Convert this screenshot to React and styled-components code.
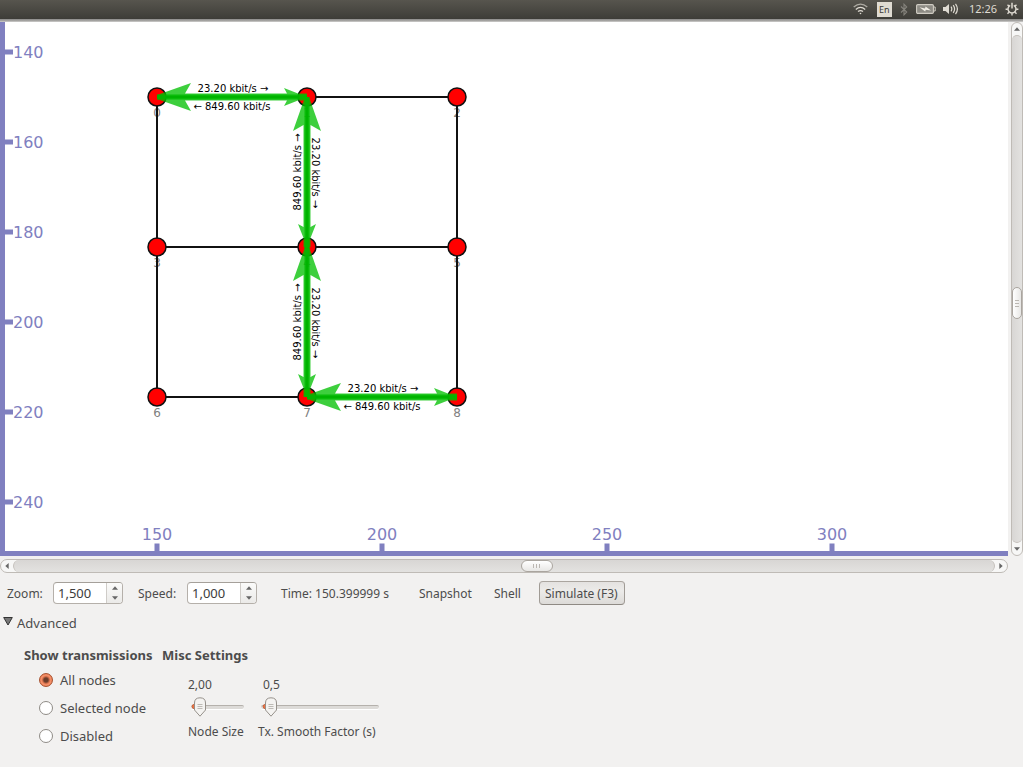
import React, { useState } from "react";
import styled, { createGlobalStyle, css } from "styled-components";

const GlobalStyle = createGlobalStyle`
  * { box-sizing: border-box; }
  body {
    margin: 0;
    background: #f2f1f0;
    color: #4c4c4c;
    font: 13px/20px "Noto Sans", "Open Sans", sans-serif;
  }
  button, input { font: inherit; color: inherit; margin: 0; }
`;

const Window = styled.div`
  display: flex;
  flex-direction: column;
  min-height: 100vh;
`;

/* ---------- desktop panel ---------- */

const Panel = styled.header`
  display: flex;
  justify-content: flex-end;
  align-items: center;
  height: 22px;
  padding: 0 4px 4px 0;
  color: #dfdbd2;
  font-size: 11px;
  line-height: 18px;
  background: linear-gradient(#57554e 0, #3f3e39 18px, #3c3b37 19px, #8c8b89 19px, #aaa9a7 21px, #d8d7d6 22px);
`;

const PanelIcon = styled.svg`
  display: block;
  flex: none;
  margin-right: ${(p) => p.$gap}px;
`;

const Language = styled.span`
  width: 15px;
  height: 15px;
  margin-right: 8px;
  background: #dfdbd2;
  color: #3c3b37;
  font-size: 9px;
  line-height: 15px;
  text-align: center;
`;

const Clock = styled.time`
  margin-right: 8px;
`;

/* ---------- topology view ---------- */

const Viewport = styled.main`
  flex: 1;
  display: grid;
  grid-template-columns: minmax(0, 1fr) 12px;
  grid-template-rows: minmax(500px, 1fr) 14px;
  gap: 3px;
`;

const Canvas = styled.svg`
  display: block;
  width: 100%;
  height: 100%;
  background: #fff;
  font-family: "DejaVu Sans", sans-serif;
`;

const Scroll = styled.div`
  display: flex;
  flex-direction: ${(p) => (p.$vertical ? "column" : "row")};
  border: 1px solid #bfbbb6;
  border-radius: 7px;
  background: #f7f7f6;
  overflow: hidden;
`;

const Trough = styled.div`
  flex: 1;
  display: flex;
  flex-direction: ${(p) => (p.$vertical ? "column" : "row")};
  border: solid #c4c0bb;
  border-width: ${(p) => (p.$vertical ? "1px 0" : "0 1px")};
  border-radius: 6px;
  background: linear-gradient(${(p) => (p.$vertical ? "to right" : "to bottom")}, #d8d6d4, #e3e2e0);
`;

const Space = styled.div`
  flex: ${(p) => p.$share};
`;

const Handle = styled.div`
  display: flex;
  flex-direction: ${(p) => (p.$vertical ? "column" : "row")};
  justify-content: center;
  align-items: center;
  gap: 2px;
  flex: 0 0 32px;
  border: 1px solid #aaa59f;
  border-radius: 6px;
  background: linear-gradient(${(p) => (p.$vertical ? "to right" : "to bottom")}, #fff, #e8e7e5);
`;

const Grip = styled.i`
  width: ${(p) => (p.$vertical ? 4 : 1)}px;
  height: ${(p) => (p.$vertical ? 1 : 4)}px;
  background: #bbb7b2;
`;

const ScrollButton = styled.button`
  display: flex;
  justify-content: center;
  align-items: center;
  flex: 0 0 12px;
  padding: 0;
  border: 0;
  background: none;
`;

/* ---------- controls ---------- */

const Toolbar = styled.div`
  display: flex;
  align-items: center;
  height: 24px;
  margin: 8px 0 8px 7px;
`;

const Field = styled.div`
  display: flex;
  align-items: center;
  justify-content: space-between;
  width: ${(p) => p.$width}px;
  margin-right: ${(p) => p.$gap}px;
  label { font-size: 12px; padding-top: 2px; }
`;

const SpinBox = styled.div`
  display: flex;
  width: 70px;
  height: 22px;
  border: 1px solid #b5b0aa;
  border-top-color: #a5a09a;
  border-radius: 4px;
  background: #fff;
  overflow: hidden;
  input {
    flex: 1;
    min-width: 0;
    padding: 0 4px;
    border: 0;
    outline: 0;
    color: #3c3c3c;
    background: none;
  }
`;

const SpinButtons = styled.div`
  display: flex;
  flex-direction: column;
  flex: 0 0 16px;
  border-left: 1px solid #cfccc8;
  background: linear-gradient(#fbfbfa, #ebeae8);
`;

const SpinButton = styled.button`
  flex: 1;
  display: flex;
  justify-content: center;
  align-items: center;
  padding: 0;
  border: 0;
  background: none;
`;

const TimeText = styled.span`
  width: 132px;
  padding-top: 2px;
  font-size: 12px;
  white-space: nowrap;
`;

const ToolButton = styled.button`
  height: 24px;
  padding: 2px 5px 0;
  border: 1px solid transparent;
  border-radius: 4px;
  background: none;
  font-size: 12px;
  text-align: left;
  white-space: nowrap;
  width: ${(p) => p.$width}px;
  ${(p) =>
    p.$raised &&
    css`
      margin-left: 8px;
      border-color: #aaa59f #a09b95 #8f8a84;
      background: linear-gradient(#e4e2e0, #ecebe9 40%, #dddbd8);
    `}
`;

const Expander = styled.button`
  display: flex;
  align-items: center;
  gap: 4px;
  align-self: flex-start;
  height: 20px;
  padding: 0 0 0 3px;
  border: 0;
  background: none;
  svg { margin-bottom: 2px; }
`;

const Settings = styled.div`
  display: flex;
  gap: 16px;
  padding: 12px 24px 17px;
`;

const Group = styled.fieldset`
  width: ${(p) => p.$width};
  min-width: 0;
  margin: 0;
  padding: 0;
  border: 0;
`;

const Legend = styled.legend`
  height: 21px;
  padding: 0;
  font-weight: 700;
  line-height: 21px;
  white-space: nowrap;
`;

const RadioRow = styled.label`
  display: flex;
  align-items: center;
  gap: 7px;
  height: 28px;
  padding-left: 15px;
  white-space: nowrap;
`;

const Radio = styled.input`
  appearance: none;
  flex: none;
  width: 14px;
  height: 14px;
  border: 1px solid #8f8b86;
  border-radius: 50%;
  background: #fff;
  &:checked {
    border-color: #a8512f;
    background: radial-gradient(circle, #6b3c2a 0 2px, #ee7f57 4px, #f4956f 5px, #e2693d 7px);
  }
`;

const Scales = styled.div`
  display: flex;
  align-items: flex-start;
  gap: 12px;
  padding: 9px 0 0 26px;
`;

const Scale = styled.div`
  display: flex;
  flex-direction: column;
  width: ${(p) => p.$width}px;
  font-size: 12px;
  white-space: nowrap;
  output { padding-left: ${(p) => p.$inset}px; }
`;

const SliderBox = styled.div`
  position: relative;
  height: 20px;
  margin: 2px 2px 5px 3px;
`;

const Range = styled.input`
  appearance: none;
  display: block;
  width: 100%;
  height: 20px;
  background: none;
  outline: 0;
  &::-webkit-slider-runnable-track {
    height: 4px;
    border-top: 1px solid #b5b1ac;
    border-radius: 2px;
    background: #dddbd8;
    box-shadow: 0 1px 0 #fff;
  }
  &::-webkit-slider-thumb {
    appearance: none;
    width: 12px;
    height: 20px;
    margin-top: -9px;
    opacity: 0;
  }
`;

const Thumb = styled.svg`
  position: absolute;
  top: 0;
  pointer-events: none;
`;

const ARROWS = {
  up: "M0 4 3.5 0 7 4Z",
  down: "M0 0h7L3.5 4Z",
  left: "M4 0v7L0 3.5Z",
  right: "M0 0v7L4 3.5Z",
};

function Arrow({ dir }) {
  const sideways = dir === "left" || dir === "right";
  return (
    <svg width={sideways ? 4 : 6} height={sideways ? 6 : 4} viewBox={sideways ? "0 0 4 7" : "0 0 7 4"} aria-hidden="true">
      <path d={ARROWS[dir]} fill="#666" />
    </svg>
  );
}

function ScrollBar({ vertical, before, after }) {
  return (
    <Scroll $vertical={vertical}>
      <ScrollButton aria-label={vertical ? "Scroll up" : "Scroll left"}>
        <Arrow dir={vertical ? "up" : "left"} />
      </ScrollButton>
      <Trough $vertical={vertical}>
        <Space $share={before} />
        <Handle $vertical={vertical}>
          <Grip $vertical={vertical} />
          <Grip $vertical={vertical} />
          <Grip $vertical={vertical} />
        </Handle>
        <Space $share={after} />
      </Trough>
      <ScrollButton aria-label={vertical ? "Scroll down" : "Scroll right"}>
        <Arrow dir={vertical ? "down" : "right"} />
      </ScrollButton>
    </Scroll>
  );
}

/* ---------- drawing of the network ---------- */

const AXIS = "#8080c0";
const columns = [157, 307, 457];
const rows = [75, 225, 375];
const nodes = rows.flatMap((y, r) => columns.map((x, c) => ({ id: r * 3 + c, x, y })));
const links = [[0, 2], [3, 5], [6, 8], [0, 6], [1, 7], [2, 8]];
const flows = [[0, 1], [1, 4], [4, 7], [7, 8]];
const yTicks = [140, 160, 180, 200, 220, 240];
const xTicks = [150, 200, 250, 300];

function Flow({ from, to }) {
  const a = nodes[from];
  const b = nodes[to];
  const upright = a.x === b.x;
  return (
    <g transform={`translate(${a.x} ${a.y})`}>
      <g transform={upright ? "rotate(90)" : undefined}>
        <path
          d="M0 -2 34 -14 28 -3.5H130L127 -9 141 -3.5H150V3.5H141L127 9 130 3.5H28L34 14 0 2Z"
          fill="#00c000"
          fillOpacity="0.76"
        />
        <path d="M0 0H150" stroke="#00b800" strokeOpacity="0.85" strokeWidth="5" />
      </g>
      <g fontSize="10" textAnchor="middle" fill="#000">
        {upright ? (
          <>
            <text transform="translate(-6 75) rotate(-90)">849.60 kbit/s →</text>
            <text transform="translate(5 76) rotate(90)">23.20 kbit/s →</text>
          </>
        ) : (
          <>
            <text x="76" y="-5">23.20 kbit/s →</text>
            <text x="75" y="13">← 849.60 kbit/s</text>
          </>
        )}
      </g>
    </g>
  );
}

function Topology() {
  return (
    <Canvas role="img" aria-label="Network topology">
      <rect width="5" height="100%" fill={AXIS} />
      <g fill={AXIS} fontSize="16">
        {yTicks.map((v, i) => (
          <g key={v} transform={`translate(0 ${30 + i * 90})`}>
            <rect x="5" y="-2.5" width="8" height="5" />
            <text x="13" y="6">{v}</text>
          </g>
        ))}
      </g>
      <svg y="100%" overflow="visible" fill={AXIS} fontSize="16">
        <rect y="-5" width="100%" height="5" />
        {xTicks.map((v, i) => (
          <g key={v} transform={`translate(${157 + i * 225} 0)`}>
            <rect x="-2.5" y="-12.5" width="5" height="8" />
            <text y="-16" textAnchor="middle">{v}</text>
          </g>
        ))}
      </svg>
      <g fill="#808080" fontSize="12" textAnchor="middle">
        {nodes.map((n) => (
          <text key={n.id} x={n.x} y={n.y + 20}>{n.id}</text>
        ))}
      </g>
      <g stroke="#111" strokeWidth="2">
        {links.map(([a, b]) => (
          <line key={`${a}-${b}`} x1={nodes[a].x} y1={nodes[a].y} x2={nodes[b].x} y2={nodes[b].y} />
        ))}
      </g>
      <g fill="#f00" stroke="#111" strokeWidth="1.5">
        {nodes.map((n) => (
          <circle key={n.id} cx={n.x} cy={n.y} r="9" />
        ))}
      </g>
      {flows.map(([a, b]) => (
        <Flow key={a} from={a} to={b} />
      ))}
    </Canvas>
  );
}

function StatusIcons() {
  return (
    <>
      <PanelIcon $gap={9} width="15" height="12" viewBox="0 0 15 12" fill="none" stroke="#dfdbd2" strokeWidth="1.3" aria-label="Wireless">
        <path d="M.7 4Q7.5 -1.6 14.3 4" opacity=".65" />
        <path d="M2.8 6.4Q7.5 2.4 12.2 6.4" />
        <path d="M5 8.6Q7.5 6.6 10 8.6" />
        <circle cx="7.5" cy="10.5" r=".8" fill="#dfdbd2" stroke="none" />
      </PanelIcon>
      <Language>En</Language>
      <PanelIcon $gap={8} width="8" height="13" viewBox="0 0 8 13" fill="none" stroke="#85837c" strokeWidth="1.1" aria-label="Bluetooth">
        <path d="M1 3.5 6.7 9 4 11.8V1.2L6.7 4 1 9.5" />
      </PanelIcon>
      <PanelIcon $gap={7} width="20" height="10" viewBox="0 0 20 10" aria-label="Battery">
        <rect x=".6" y=".6" width="16.8" height="8.8" rx="1.2" fill="#8d8b84" stroke="#d0ccc3" strokeWidth="1.1" />
        <path d="M18 3h1.2v4H18" fill="none" stroke="#d0ccc3" />
        <path d="M3.5 3.2 9 4.6 9.6 2.6 15 6.6 9.8 5.8 9.2 7.4Z" fill="#f1eee6" />
      </PanelIcon>
      <PanelIcon $gap={10} width="16" height="12" viewBox="0 0 16 12" aria-label="Volume">
        <path d="M0 4h2.5L6 1v10L2.5 8H0Z" fill="#dfdbd2" />
        <path d="M8 3.7q1.6 2.3 0 4.6M10.2 2.2q2.8 3.8 0 7.6M12.5 .8q3.8 5.2 0 10.4" fill="none" stroke="#dfdbd2" strokeWidth="1.2" />
      </PanelIcon>
      <Clock>12:26</Clock>
      <PanelIcon $gap={0} width="14" height="14" viewBox="0 0 14 14" fill="none" stroke="#dfdbd2" aria-label="Session">
        <path d="M5.2 3.4a4 4 0 1 0 3.6 0" strokeWidth="1.5" />
        <path d="M7 .7V6.6" strokeWidth="1.5" />
        <path d="M.6 7.2h2.2M11.2 7.2h2.2M2.5 2.7l1.4 1.4M11.5 2.7l-1.4 1.4M2.5 11.7l1.4-1.4M11.5 11.7l-1.4-1.4M7 11.3v2.2" strokeWidth="1.4" />
      </PanelIcon>
    </>
  );
}

function Spin({ id, label, initial, width, gap }) {
  const [value, setValue] = useState(initial);
  return (
    <Field $width={width} $gap={gap}>
      <label htmlFor={id}>{label}</label>
      <SpinBox>
        <input id={id} value={value} onChange={(e) => setValue(e.target.value)} />
        <SpinButtons>
          <SpinButton aria-label={`Increase ${id}`}><Arrow dir="up" /></SpinButton>
          <SpinButton aria-label={`Decrease ${id}`}><Arrow dir="down" /></SpinButton>
        </SpinButtons>
      </SpinBox>
    </Field>
  );
}

function Slider({ id, label, digits, max, step, initial, width, inset }) {
  const [value, setValue] = useState(initial);
  const share = value / max;
  return (
    <Scale $width={width} $inset={inset}>
      <output htmlFor={id}>{value.toFixed(digits).replace(".", ",")}</output>
      <SliderBox>
        <Range id={id} type="range" min="0" max={max} step={step} value={value} onChange={(e) => setValue(Number(e.target.value))} />
        <Thumb width="16" height="20" viewBox="0 0 16 20" style={{ left: `calc(${share} * (100% - 12px) - 3px)` }}>
          <path d="M5 7.2Q2 7.2 2 9.5T5 11.8Z" fill="#ee7445" stroke="#b9562f" strokeWidth=".7" />
          <path d="M4.5 6Q4.5 .8 10 .8T15.5 6V13L10 19.2 4.5 13Z" fill="#f4f3f1" stroke="#96918b" />
          <path d="M7.5 7.5h5M7.5 9.5h5M7.5 11.5h5" stroke="#b7b3ae" strokeWidth=".9" />
        </Thumb>
      </SliderBox>
      <label htmlFor={id}>{label}</label>
    </Scale>
  );
}

export default function App() {
  const [shown, setShown] = useState("All nodes");
  const [open, setOpen] = useState(true);
  return (
    <Window>
      <GlobalStyle />
      <Panel><StatusIcons /></Panel>
      <Viewport>
        <Topology />
        <ScrollBar vertical before={254} after={225} />
        <ScrollBar before={508} after={442} />
      </Viewport>
      <Toolbar>
        <Spin id="zoom" label="Zoom:" initial="1,500" width={116} gap={15} />
        <Spin id="speed" label="Speed:" initial="1,000" width={119} gap={24} />
        <TimeText>Time: 150.399999 s</TimeText>
        <ToolButton $width={75}>Snapshot</ToolButton>
        <ToolButton $width={43}>Shell</ToolButton>
        <ToolButton $width={86} $raised>Simulate (F3)</ToolButton>
      </Toolbar>
      <Expander aria-expanded={open} onClick={() => setOpen(!open)}>
        <svg width="10" height="12" viewBox="0 0 10 12" aria-hidden="true">
          <path d="M.7 1.5h8.6L5 9Z" fill="#777" stroke="#333" />
        </svg>
        Advanced
      </Expander>
      {open && (
        <Settings>
          <Group $width="122px">
            <Legend>Show transmissions</Legend>
            {["All nodes", "Selected node", "Disabled"].map((name) => (
              <RadioRow key={name}>
                <Radio type="radio" name="transmissions" checked={shown === name} onChange={() => setShown(name)} />
                {name}
              </RadioRow>
            ))}
          </Group>
          <Group $width="auto">
            <Legend>Misc Settings</Legend>
            <Scales>
              <Slider id="node-size" label="Node Size" digits={2} max={50} step={0.1} initial={2} width={58} inset={0} />
              <Slider id="smooth" label="Tx. Smooth Factor (s)" digits={1} max={20} step={0.1} initial={0.5} width={123} inset={5} />
            </Scales>
          </Group>
        </Settings>
      )}
    </Window>
  );
}
